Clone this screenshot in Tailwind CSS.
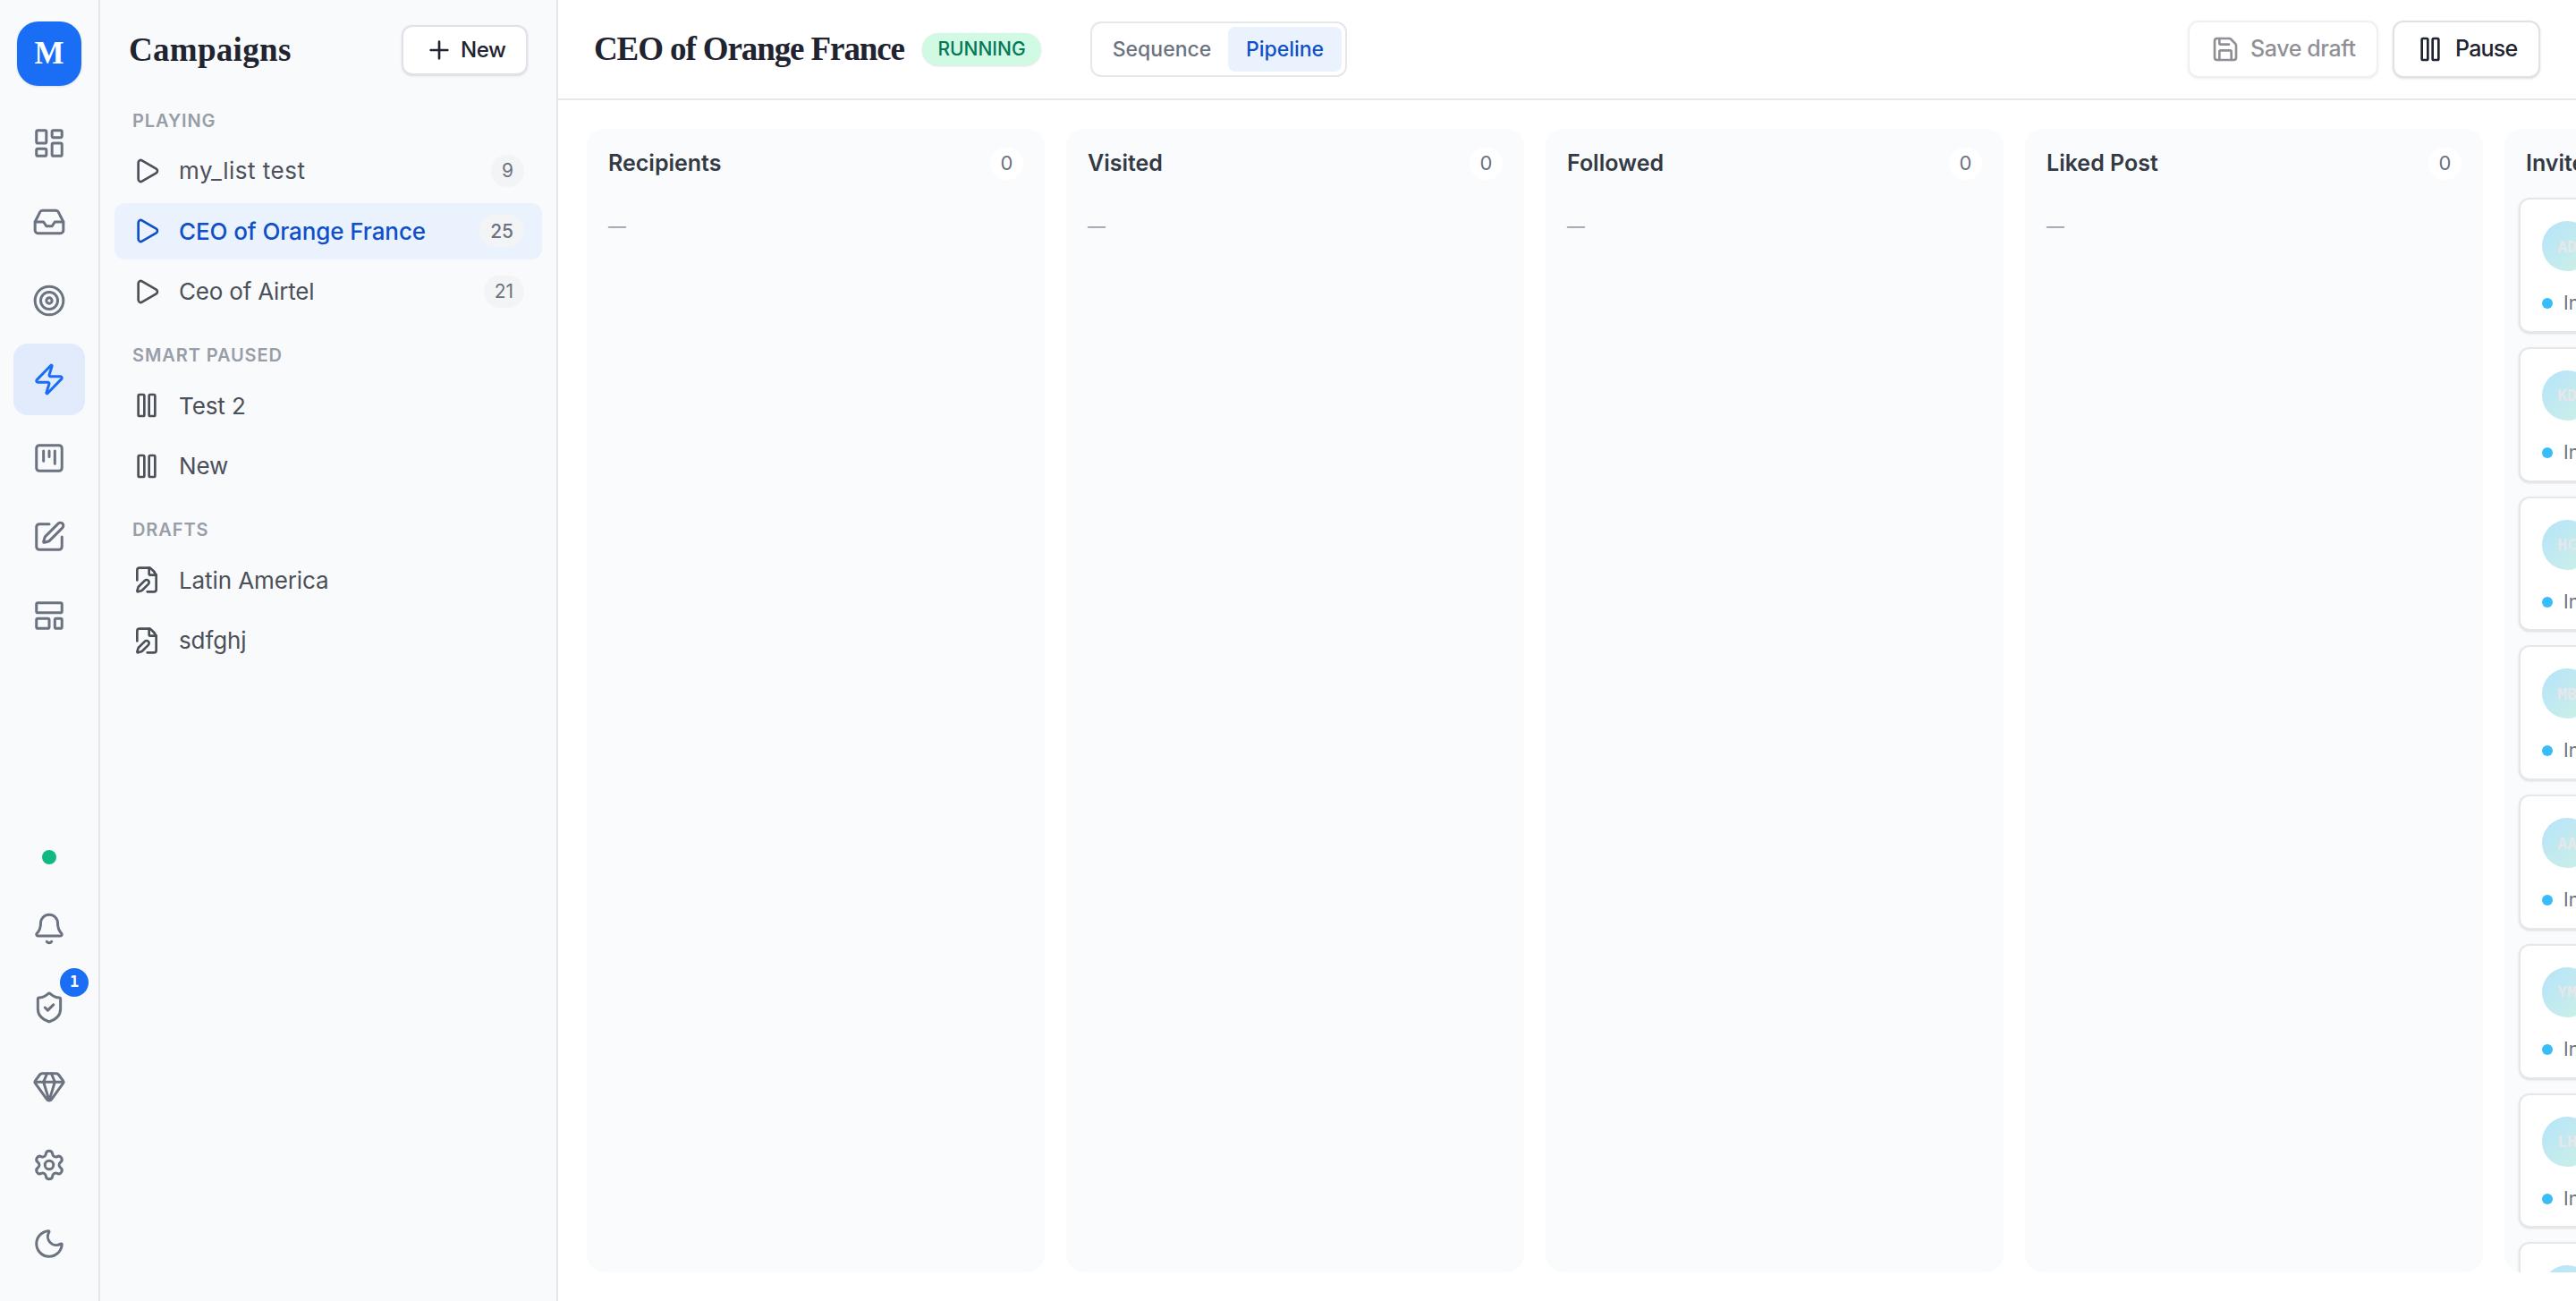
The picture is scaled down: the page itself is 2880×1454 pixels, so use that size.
<!DOCTYPE html>
<html lang="en">
<head>
    <meta charset="UTF-8">
    <meta name="viewport" content="width=device-width, initial-scale=1.0">
    <title>Campaigns</title>
    <script src="https://cdn.jsdelivr.net/npm/@tailwindcss/browser@4"></script>
</head>
<body class="flex h-screen overflow-hidden bg-white font-['Inter',sans-serif] text-[#1f2430]">

    <!-- Icons -->
    <svg class="hidden">
        <symbol id="dashboard" viewBox="0 0 24 24"><rect x="3" y="3" width="7" height="9" rx="1"/><rect x="14" y="3" width="7" height="5" rx="1"/><rect x="14" y="12" width="7" height="9" rx="1"/><rect x="3" y="16" width="7" height="5" rx="1"/></symbol>
        <symbol id="inbox" viewBox="0 0 24 24"><path d="M22 12h-6l-2 3h-4l-2-3H2"/><path d="M5.45 5.11 2 12v6a2 2 0 0 0 2 2h16a2 2 0 0 0 2-2v-6l-3.45-6.89A2 2 0 0 0 16.76 4H7.24a2 2 0 0 0-1.79 1.11z"/></symbol>
        <symbol id="target" viewBox="0 0 24 24"><circle cx="12" cy="12" r="10"/><circle cx="12" cy="12" r="6"/><circle cx="12" cy="12" r="2"/></symbol>
        <symbol id="zap" viewBox="0 0 24 24"><path d="M4 14a1 1 0 0 1-.78-1.63l9.9-10.2a.5.5 0 0 1 .86.46l-1.92 6.02A1 1 0 0 0 13 10h7a1 1 0 0 1 .78 1.63l-9.9 10.2a.5.5 0 0 1-.86-.46l1.92-6.02A1 1 0 0 0 11 14z"/></symbol>
        <symbol id="kanban" viewBox="0 0 24 24"><rect x="3" y="3" width="18" height="18" rx="2"/><path d="M8 7v7M12 7v4M16 7v9"/></symbol>
        <symbol id="edit" viewBox="0 0 24 24"><path d="M12 3H5a2 2 0 0 0-2 2v14a2 2 0 0 0 2 2h14a2 2 0 0 0 2-2v-7"/><path d="M18.375 2.625a1 1 0 0 1 3 3l-9.013 9.014a2 2 0 0 1-.853.505l-2.873.84a.5.5 0 0 1-.62-.62l.84-2.873a2 2 0 0 1 .506-.852z"/></symbol>
        <symbol id="template" viewBox="0 0 24 24"><rect x="3" y="3" width="18" height="7" rx="1"/><rect x="3" y="14" width="9" height="7" rx="1"/><rect x="16" y="14" width="5" height="7" rx="1"/></symbol>
        <symbol id="bell" viewBox="0 0 24 24"><path d="M10.268 21a2 2 0 0 0 3.464 0"/><path d="M3.262 15.326A1 1 0 0 0 4 17h16a1 1 0 0 0 .74-1.673C19.41 13.956 18 12.499 18 8A6 6 0 0 0 6 8c0 4.499-1.411 5.956-2.738 7.326"/></symbol>
        <symbol id="shield" viewBox="0 0 24 24"><path d="M20 13c0 5-3.5 7.5-7.66 8.95a1 1 0 0 1-.67-.01C7.5 20.5 4 18 4 13V6a1 1 0 0 1 1-1c2 0 4.5-1.2 6.24-2.72a1.17 1.17 0 0 1 1.52 0C14.51 3.81 17 5 19 5a1 1 0 0 1 1 1z"/><path d="m9 12 2 2 4-4"/></symbol>
        <symbol id="gem" viewBox="0 0 24 24"><path d="M10.5 3 8 9l4 13 4-13-2.5-6"/><path d="M17 3a2 2 0 0 1 1.6.8l3 4a2 2 0 0 1 .013 2.382l-7.99 10.986a2 2 0 0 1-3.247 0l-7.99-10.986A2 2 0 0 1 2.4 7.8l2.998-3.997A2 2 0 0 1 7 3z"/><path d="M2 9h20"/></symbol>
        <symbol id="settings" viewBox="0 0 24 24"><path d="M9.671 4.136a2.34 2.34 0 0 1 4.659 0 2.34 2.34 0 0 0 3.319 1.915 2.34 2.34 0 0 1 2.33 4.033 2.34 2.34 0 0 0 0 3.831 2.34 2.34 0 0 1-2.33 4.033 2.34 2.34 0 0 0-3.319 1.915 2.34 2.34 0 0 1-4.659 0 2.34 2.34 0 0 0-3.32-1.915 2.34 2.34 0 0 1-2.33-4.033 2.34 2.34 0 0 0 0-3.831A2.34 2.34 0 0 1 6.35 6.051a2.34 2.34 0 0 0 3.319-1.915"/><circle cx="12" cy="12" r="3"/></symbol>
        <symbol id="moon" viewBox="0 0 24 24"><path d="M20.985 12.486a9 9 0 1 1-9.473-9.472c.405-.022.617.46.402.803a6 6 0 0 0 8.268 8.268c.344-.215.825-.004.803.401"/></symbol>
        <symbol id="plus" viewBox="0 0 24 24"><path d="M5 12h14M12 5v14"/></symbol>
        <symbol id="play" viewBox="0 0 24 24"><path d="M5 5a2 2 0 0 1 3.008-1.728l11.997 6.998a2 2 0 0 1 .003 3.458l-12 7A2 2 0 0 1 5 19z"/></symbol>
        <symbol id="pause" viewBox="0 0 24 24"><rect x="14" y="3" width="5" height="18" rx="1"/><rect x="5" y="3" width="5" height="18" rx="1"/></symbol>
        <symbol id="draft" viewBox="0 0 24 24"><path d="m18.226 5.226-2.52-2.52A2.4 2.4 0 0 0 14 2H6a2 2 0 0 0-2 2v8.35"/><path d="M14 2v5a1 1 0 0 0 1 1h5V20a2 2 0 0 1-2 2h-5.5"/><path d="m18.2 5.2 1.8 2.8"/><path d="M10.378 12.622a1 1 0 0 1 3 3.003L8.36 20.637a2 2 0 0 1-.854.506l-2.867.837a.5.5 0 0 1-.62-.62l.836-2.869a2 2 0 0 1 .506-.853z"/></symbol>
        <symbol id="save" viewBox="0 0 24 24"><path d="M15.2 3a2 2 0 0 1 1.4.6l3.8 3.8a2 2 0 0 1 .6 1.4V19a2 2 0 0 1-2 2H5a2 2 0 0 1-2-2V5a2 2 0 0 1 2-2z"/><path d="M17 21v-7a1 1 0 0 0-1-1H8a1 1 0 0 0-1 1v7"/><path d="M7 3v4a1 1 0 0 0 1 1h7"/></symbol>
    </svg>

    <!-- Icon rail -->
    <nav class="flex w-28 shrink-0 flex-col items-center border-r-2 border-gray-200 bg-[#f9fafc] py-6 text-[#6b7280] [&_svg]:size-[38px] [&_svg]:fill-none [&_svg]:stroke-current [&_svg]:stroke-[1.9] [&_svg]:[stroke-linecap:round] [&_svg]:[stroke-linejoin:round]">
        <div class="mb-6 flex size-[72px] items-center justify-center rounded-3xl bg-[#1a6ef5] font-['Liberation_Serif',serif] text-[35px] font-bold text-white shadow-sm">M</div>
        <div class="flex flex-col gap-2">
            <a class="flex size-20 items-center justify-center"><svg><use href="#dashboard"/></svg></a>
            <a class="flex size-20 items-center justify-center"><svg><use href="#inbox"/></svg></a>
            <a class="flex size-20 items-center justify-center"><svg><use href="#target"/></svg></a>
            <a class="flex size-20 items-center justify-center rounded-2xl bg-[#e2ebfb] text-[#1a6ef5]"><svg><use href="#zap"/></svg></a>
            <a class="flex size-20 items-center justify-center"><svg><use href="#kanban"/></svg></a>
            <a class="flex size-20 items-center justify-center"><svg><use href="#edit"/></svg></a>
            <a class="flex size-20 items-center justify-center"><svg><use href="#template"/></svg></a>
        </div>
        <div class="mt-auto mb-8 size-4 rounded-full bg-[#10b981]"></div>
        <div class="flex flex-col gap-2">
            <a class="flex size-20 items-center justify-center"><svg><use href="#bell"/></svg></a>
            <a class="relative flex size-20 items-center justify-center">
                <svg><use href="#shield"/></svg>
                <span class="absolute -top-1 -right-1 flex size-8 items-center justify-center rounded-full bg-[#1a6ef5] font-['DejaVu_Sans_Mono',monospace] text-[17px] font-bold text-white">1</span>
            </a>
            <a class="flex size-20 items-center justify-center"><svg><use href="#gem"/></svg></a>
            <a class="flex size-20 items-center justify-center"><svg><use href="#settings"/></svg></a>
            <a class="flex size-20 items-center justify-center"><svg><use href="#moon"/></svg></a>
        </div>
    </nav>

    <!-- Campaign list -->
    <aside class="w-[512px] shrink-0 border-r-2 border-gray-200 bg-[#f9fafc] [&_svg]:size-8 [&_svg]:shrink-0 [&_svg]:fill-none [&_svg]:stroke-current [&_svg]:stroke-2 [&_svg]:[stroke-linecap:round] [&_svg]:[stroke-linejoin:round]">
        <div class="flex h-28 items-center justify-between px-8">
            <h2 class="font-['Liberation_Serif',serif] text-[37px] font-bold tracking-[0.3px]">Campaigns</h2>
            <button class="flex h-14 w-[141px] items-center gap-2 rounded-xl border-2 border-[#dfe2e7] bg-white pl-6 text-[24px] font-medium tracking-[-0.4px] shadow-sm"><svg><use href="#plus"/></svg>New</button>
        </div>
        <div class="px-4 text-[26px] text-[#4b5059]">
            <h3 class="flex h-[47px] items-center pb-[2px] pl-5 text-[20px] font-semibold tracking-[0.9px] text-[#989ea8]">PLAYING</h3>
            <div class="flex flex-col gap-1">
                <div class="flex h-[63.5px] items-center gap-5 px-5 tracking-[0.5px]"><svg><use href="#play"/></svg>my_list test<span class="ml-auto flex h-9 items-center rounded-full bg-gray-100 px-3 text-[21px] tracking-normal text-[#6b7280]">9</span></div>
                <div class="flex h-[63.5px] items-center gap-5 rounded-xl bg-[#eaf2fe] px-5 font-medium tracking-[-0.1px] text-[#0f50c8]"><svg><use href="#play"/></svg>CEO of Orange France<span class="ml-auto flex h-9 items-center rounded-full bg-gray-100 px-3 text-[21px] text-[#6b7280]">25</span></div>
                <div class="flex h-[63.5px] items-center gap-5 px-5 tracking-[-0.2px]"><svg><use href="#play"/></svg>Ceo of Airtel<span class="ml-auto flex h-9 items-center rounded-full bg-gray-100 px-3 text-[21px] tracking-normal text-[#6b7280]">21</span></div>
            </div>
            <h3 class="mt-[17px] flex h-[47px] items-center pb-[2px] pl-5 text-[20px] font-semibold tracking-[0.9px] text-[#989ea8]">SMART PAUSED</h3>
            <div class="flex flex-col gap-1 tracking-[-0.1px]">
                <div class="flex h-[63.5px] items-center gap-5 px-5"><svg><use href="#pause"/></svg>Test 2</div>
                <div class="flex h-[63.5px] items-center gap-5 px-5"><svg><use href="#pause"/></svg>New</div>
            </div>
            <h3 class="mt-[17px] flex h-[47px] items-center pb-[2px] pl-5 text-[20px] font-semibold tracking-[0.9px] text-[#989ea8]">DRAFTS</h3>
            <div class="flex flex-col gap-1 tracking-[-0.1px]">
                <div class="flex h-[63.5px] items-center gap-5 px-5"><svg><use href="#draft"/></svg>Latin America</div>
                <div class="flex h-[63.5px] items-center gap-5 px-5"><svg><use href="#draft"/></svg>sdfghj</div>
            </div>
        </div>
    </aside>

    <!-- Main content -->
    <main class="flex min-w-0 flex-1 flex-col">
        <header class="flex h-28 shrink-0 items-center border-b-2 border-gray-200 px-10 [&_svg]:size-8 [&_svg]:fill-none [&_svg]:stroke-current [&_svg]:stroke-2 [&_svg]:[stroke-linecap:round] [&_svg]:[stroke-linejoin:round]">
            <h1 class="w-[367px] font-['Liberation_Serif',serif] text-[37px] font-bold tracking-[-1.1px] whitespace-nowrap">CEO of Orange France</h1>
            <span class="flex h-9 w-[133px] items-center justify-center rounded-full bg-[#d1fae5] text-[21px] font-medium text-[#047857] shadow-sm">RUNNING</span>
            <div class="ml-[55px] flex h-[62px] w-[287px] items-center justify-between rounded-xl border-2 border-gray-200 p-1 text-[23px] font-medium">
                <span class="flex flex-1 justify-center text-[#6b7280]">Sequence</span>
                <span class="flex h-[50px] w-[127px] items-center justify-center rounded-lg bg-[#eaf2fe] text-[#0f50c8]">Pipeline</span>
            </div>
            <button class="ml-auto flex h-16 w-[213px] items-center gap-3 rounded-xl border-2 border-[#dfe2e7] bg-white pl-6 text-[25px] font-medium tracking-[-0.4px] whitespace-nowrap opacity-50 shadow-sm"><svg><use href="#save"/></svg>Save draft</button>
            <button class="ml-4 flex h-16 w-[165px] items-center gap-3 rounded-xl border-2 border-[#dfe2e7] bg-white pl-6 text-[25px] font-medium tracking-[-0.8px] shadow-sm"><svg><use href="#pause"/></svg>Pause</button>
        </header>

        <!-- Pipeline board, columns are filled in below -->
        <div id="board" class="flex min-h-0 flex-1 gap-6 overflow-hidden p-8"></div>
    </main>

    <script>
        const board = document.getElementById("board");

        const columns = [
            { name: "Recipients", people: [] },
            { name: "Visited", people: [] },
            { name: "Followed", people: [] },
            { name: "Liked Post", people: [] },
            { name: "Invited", people: ["AD", "KD", "HC", "MB", "AA", "YM", "LH", "AB"] },
        ];

        // One person in a column
        function card(initials) {
            return `
                <div class="h-[150.75px] shrink-0 rounded-xl border-2 border-gray-200 bg-white p-6 shadow-sm">
                    <div class="flex size-14 items-center justify-center rounded-full bg-linear-to-br from-[#b5e3fa] to-[#cff1e4] font-['DejaVu_Sans_Mono',monospace] text-[18px] font-bold text-gray-200">${initials}</div>
                    <div class="mt-5 flex items-center gap-3 text-[21px] leading-8 text-[#6b7280]"><span class="size-3 rounded-full bg-[#38bdf8]"></span>Invited</div>
                </div>`;
        }

        columns.forEach(column => {
            const body = column.people.length
                ? `<div class="flex flex-col gap-4 px-4">${column.people.map(card).join("")}</div>`
                : `<div class="px-6 pt-[14px] text-[20px] leading-9 text-[#9ca3af]">—</div>`;

            board.innerHTML += `
                <section class="w-[512px] shrink-0 overflow-hidden rounded-[20px] bg-[#fafbfd]">
                    <div class="flex h-[77px] items-center justify-between px-6">
                        <h4 class="pt-[1px] text-[25px] font-semibold text-[#343a44]">${column.name}</h4>
                        <span class="flex h-9 min-w-[37px] items-center justify-center rounded-full bg-white text-[22px] text-[#6b7280]">${column.people.length}</span>
                    </div>
                    ${body}
                </section>`;
        });
    </script>
</body>
</html>
